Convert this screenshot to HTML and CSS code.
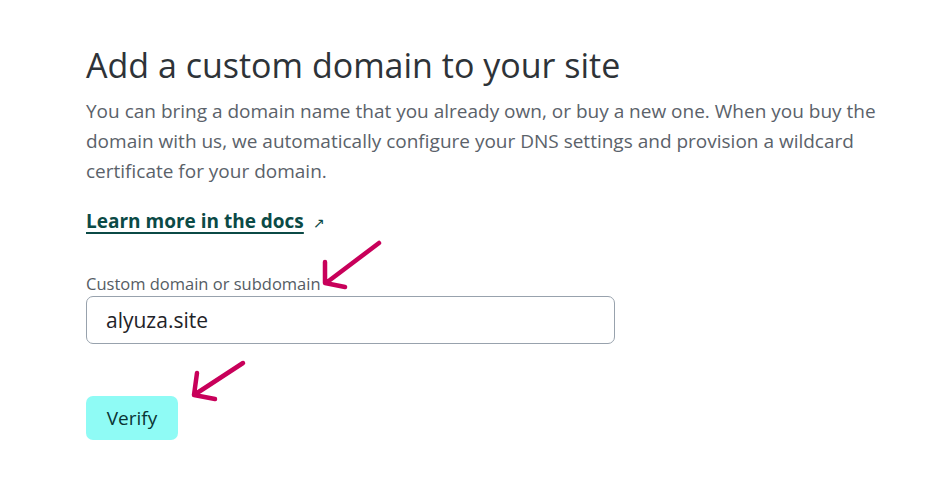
FILE: index.html
```html
<!DOCTYPE html>
<html>
<head>
<meta charset="utf-8">
<link rel="stylesheet" href="styles.css">
</head>
<body>
<main class="page">
  <h1 class="title">Add a custom domain to your site</h1>
  <p class="lead">You can bring a domain name that you already own, or buy a new one. When you buy the domain with us, we automatically configure your DNS settings and provision a wildcard certificate for your domain.</p>
  <p class="docs"><a class="docs-link" href="#">Learn more in the docs</a><span class="ext">&#8599;</span></p>
  <div class="field">
    <label class="label" for="domain">Custom domain or subdomain</label>
    <input class="input" id="domain" type="text" value="alyuza.site">
  </div>
  <div class="actions">
    <button class="btn" type="button">Verify</button>
  </div>
  <svg class="arrow arrow-1" width="70" height="60" viewBox="0 0 70 60"><path d="M63 8 L10 48 M9 27 L9 48 L29 52" fill="none" stroke="#c8005a" stroke-width="4.5" stroke-linecap="round" stroke-linejoin="round"/></svg>
  <svg class="arrow arrow-2" width="70" height="55" viewBox="0 0 70 55"><path d="M57 8 L8 40 M11 18 L8 40 L29 44" fill="none" stroke="#c8005a" stroke-width="4.5" stroke-linecap="round" stroke-linejoin="round"/></svg>
</main>
</body>
</html>
```
FILE: styles.css
```css
html, body {
  margin: 0;
  padding: 0;
  background: #ffffff;
}
.page {
  font-family: "Open Sans", "Noto Sans", sans-serif;
  padding: 34px 0 0 86px;
  width: 830px;
  position: relative;
}
.title {
  margin: 0;
  font-size: 34px;
  font-weight: 500;
  line-height: 62px;
  color: #2e3338;
}
.lead {
  margin: 0;
  font-size: 19px;
  line-height: 30px;
  color: #5b626a;
}
.docs {
  margin: 20px 0 0 0;
  font-size: 19px;
  line-height: 30px;
}
.docs-link {
  color: #0b4a46;
  font-weight: 700;
  text-decoration: underline;
  text-underline-offset: 4px;
  text-decoration-thickness: 2px;
}
.ext {
  color: #0b4a46;
  font-size: 14px;
  margin-left: 9px;
}
.field {
  margin-top: 36px;
  display: flex;
  flex-direction: column;
}
.label {
  font-size: 16.5px;
  line-height: 20px;
  color: #555c64;
  margin-bottom: 2px;
}
.input {
  box-sizing: border-box;
  width: 529px;
  height: 48px;
  border: 1px solid #98a2ad;
  border-radius: 7px;
  padding: 0 19px;
  font-family: inherit;
  font-size: 21px;
  font-weight: 500;
  color: #1f2328;
  background: #fff;
  outline: none;
}
.actions {
  margin-top: 52px;
}
.btn {
  width: 92px;
  height: 44px;
  border: none;
  border-radius: 7px;
  background: #8ffbf5;
  font-family: inherit;
  font-size: 19px;
  font-weight: 500;
  color: #0a3434;
  padding: 0;
}
.arrow {
  position: absolute;
}
.arrow-1 {
  left: 316px;
  top: 235px;
}
.arrow-2 {
  left: 186px;
  top: 355px;
}
```
